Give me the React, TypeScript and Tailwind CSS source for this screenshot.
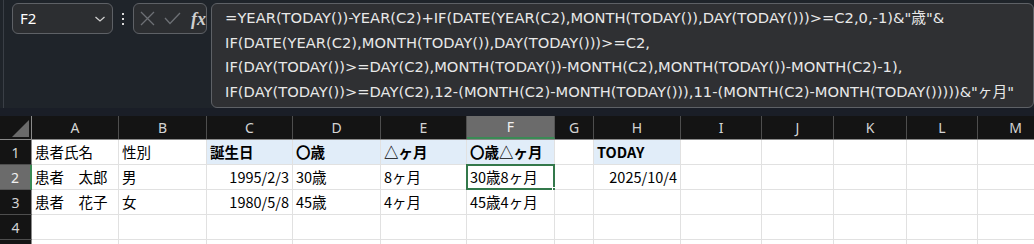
import React from "react";

const cols = [
  { k: "A", w: "w-[87px]" },
  { k: "B", w: "w-[88px]" },
  { k: "C", w: "w-[86px]" },
  { k: "D", w: "w-[88px]" },
  { k: "E", w: "w-[86px]" },
  { k: "F", w: "w-[88px]" },
  { k: "G", w: "w-[39px]" },
  { k: "H", w: "w-[87px]" },
  { k: "I", w: "w-[81px]" },
  { k: "J", w: "w-[72px]" },
  { k: "K", w: "w-[73px]" },
  { k: "L", w: "w-[71px]" },
  { k: "M", w: "w-[76px]" },
];

type Cell = { t?: string; right?: boolean; bold?: boolean; blue?: boolean };

const rows: Cell[][] = [
  [
    { t: "患者氏名" },
    { t: "性別" },
    { t: "誕生日", bold: true, blue: true },
    { t: "〇歳", bold: true, blue: true },
    { t: "△ヶ月", bold: true, blue: true },
    { t: "〇歳△ヶ月", bold: true, blue: true },
    {},
    { t: "TODAY", bold: true, blue: true },
  ],
  [
    { t: "患者　太郎" },
    { t: "男" },
    { t: "1995/2/3", right: true },
    { t: "30歳" },
    { t: "8ヶ月" },
    { t: "30歳8ヶ月" },
    {},
    { t: "2025/10/4", right: true },
  ],
  [
    { t: "患者　花子" },
    { t: "女" },
    { t: "1980/5/8", right: true },
    { t: "45歳" },
    { t: "4ヶ月" },
    { t: "45歳4ヶ月" },
  ],
  [],
  [],
];

const formula = [
  '=YEAR(TODAY())-YEAR(C2)+IF(DATE(YEAR(C2),MONTH(TODAY()),DAY(TODAY()))>=C2,0,-1)&"歳"&',
  "IF(DATE(YEAR(C2),MONTH(TODAY()),DAY(TODAY()))>=C2,",
  "IF(DAY(TODAY())>=DAY(C2),MONTH(TODAY())-MONTH(C2),MONTH(TODAY())-MONTH(C2)-1),",
  'IF(DAY(TODAY())>=DAY(C2),12-(MONTH(C2)-MONTH(TODAY())),11-(MONTH(C2)-MONTH(TODAY()))))&"ヶ月"',
];

export default function App() {
  return (
    <div className="w-[1034px] h-[244px] overflow-hidden bg-[#1f242a] relative font-['DejaVu_Sans','Noto_Sans_CJK_JP',sans-serif]">
      {/* top bar */}
      <div className="h-[108px] flex items-start pt-[3px] pl-[12px] relative">
        <div className="absolute left-[3px] top-0 h-[108px] w-px bg-[#3a3f46]" />
        <div className="w-[102px] h-[31px] rounded-[6px] border border-[#5e6166] bg-[#2c2e31] flex items-center justify-between pl-[7px] pr-[6px] text-[15px] text-white font-['Noto_Sans',sans-serif]">
          <span>F2</span>
          <svg width="12" height="8" viewBox="0 0 12 8">
            <path d="M1.5 2 L6 6 L10.5 2" fill="none" stroke="#d0d0d0" strokeWidth="1.3" />
          </svg>
        </div>
        <div className="w-[20px] h-[31px] flex flex-col items-center justify-center gap-[3px]">
          <div className="w-[2px] h-[2px] bg-[#d8d8d8]" />
          <div className="w-[2px] h-[2px] bg-[#d8d8d8]" />
          <div className="w-[2px] h-[2px] bg-[#d8d8d8]" />
        </div>
        <div className="w-[74px] h-[31px] rounded-[6px] border border-[#5e6166] bg-[#2c2e31] flex items-center pl-[6px]">
          <svg width="15" height="15" viewBox="0 0 15 15">
            <path d="M1 1 L14 14 M14 1 L1 14" stroke="#6d7075" strokeWidth="1.3" fill="none" />
          </svg>
          <svg width="17" height="13" viewBox="0 0 17 13" className="ml-[9px]">
            <path d="M1 6 L6 11.5 L16 1" stroke="#6d7075" strokeWidth="1.3" fill="none" />
          </svg>
          <span className="ml-[10px] text-[18px] italic font-bold text-[#cfcfcf] leading-none font-['Liberation_Serif',serif]">
            fx
          </span>
        </div>
        <div className="ml-[4px] w-[830px] h-[105px] rounded-[6px] border border-[#5e6166] bg-[#2f3033] pl-[13px] pt-[2px] text-[14.7px] leading-[24.7px] text-[#e8e8e8] whitespace-nowrap overflow-hidden">
          {formula.map((l, i) => (
            <div key={i}>{l}</div>
          ))}
        </div>
      </div>
      <div className="h-[8px] bg-[#1a1e27]" />
      {/* grid */}
      <div className="flex flex-col font-['Noto_Sans',sans-serif]">
        <div className="flex h-[24px] bg-[#141414] border-b border-[#8a8a8a]">
          <div className="w-[32px] shrink-0 h-full border-r border-[#8a8a8a] relative">
            <svg width="32" height="23" viewBox="0 0 32 23" className="absolute left-0 top-0">
              <path d="M12 21 L29 21 L29 4 Z" fill="#6b6b6b" />
            </svg>
          </div>
          {cols.map((c) => {
            const sel = c.k === "F";
            return (
              <div
                key={c.k}
                className={
                  c.w +
                  (sel
                    ? " shrink-0 h-full flex items-center justify-center text-[14px] text-[#f0f0f0] bg-[#6b6b6b] border-r border-[#555] border-b-2 border-b-[#3a8a55]"
                    : " shrink-0 h-full flex items-center justify-center text-[14px] text-[#d4d4d4] border-r border-[#4e4e4e]")
                }
              >
                {c.k}
              </div>
            );
          })}
        </div>
        {rows.map((r, ri) => (
          <div key={ri} className="flex h-[25px]">
            <div
              className={
                ri === 1
                  ? "w-[32px] shrink-0 h-full bg-[#6b6b6b] text-[#f0f0f0] border-b border-[#555] border-r-2 border-r-[#3a8a55] flex items-center justify-center text-[14px]"
                  : "w-[32px] shrink-0 h-full bg-[#141414] text-[#d4d4d4] border-b border-[#4e4e4e] border-r border-r-[#8a8a8a] flex items-center justify-center text-[14px]"
              }
            >
              {ri < 4 ? ri + 1 : ""}
            </div>
            {cols.map((c, ci) => {
              const cell = r[ci] || {};
              const sel = ri === 1 && ci === 5;
              return (
                <div
                  key={c.k}
                  className={
                    c.w +
                    " shrink-0 h-full relative border-r border-b border-[#e1e1e1] flex items-center text-[14.5px] text-black whitespace-nowrap font-['Noto_Sans_CJK_JP',sans-serif] " +
                    (cell.blue ? "bg-[#e1edf9] " : "bg-white ") +
                    (cell.right ? "justify-end pr-[3px] " : "pl-[3px] ") +
                    (cell.bold ? "font-bold " : "")
                  }
                >
                  {cell.t}
                  {sel && (
                    <>
                      <div className="absolute left-[-1px] top-[-1px] right-[-1px] bottom-[-1px] border-2 border-[#33784b] pointer-events-none" />
                      <div className="absolute right-[-4px] bottom-[-4px] w-[6px] h-[6px] bg-[#33784b] border border-white" />
                    </>
                  )}
                </div>
              );
            })}
          </div>
        ))}
      </div>
    </div>
  );
}
